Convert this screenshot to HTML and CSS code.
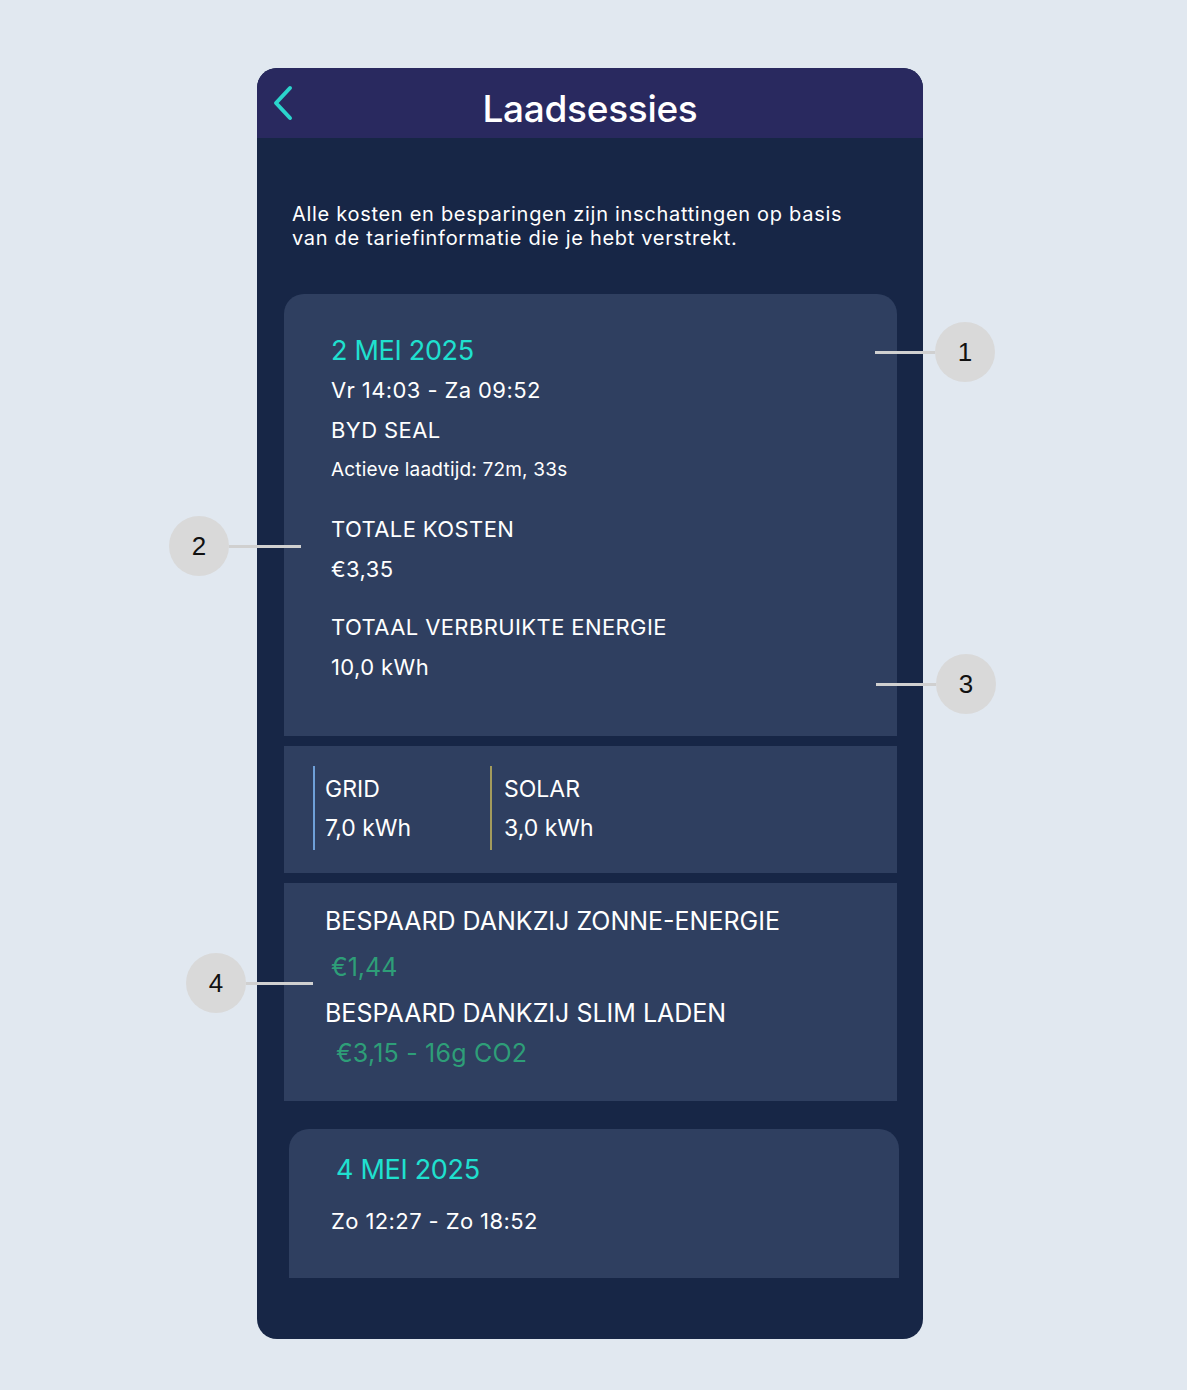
FILE: index.html
```html
<!DOCTYPE html>
<html>
    <head>
        <title>Laadsessies</title>
        <link rel="stylesheet" href="styles.css">
    </head>
    <body>
        <div class="phone">
            <div class="header">
                <svg class="back" width="24" height="36" viewBox="0 0 24 36">
                    <path d="M19 3 L5 18 L19 33" fill="none" stroke="#2bd4cc" stroke-width="4" stroke-linecap="round" stroke-linejoin="round"/>
                </svg>
                <p class="title">Laadsessies</p>
            </div>
            <div class="content">
                <p class="intro">Alle kosten en besparingen zijn inschattingen op basis van de tariefinformatie die je hebt verstrekt.</p>

                <div class="card first">
                    <p class="date">2 MEI 2025</p>
                    <p class="row">Vr 14:03 - Za 09:52</p>
                    <p class="row">BYD SEAL</p>
                    <p class="row small">Actieve laadtijd: 72m, 33s</p>
                    <p class="row group">TOTALE KOSTEN</p>
                    <p class="row">€3,35</p>
                    <p class="row group2">TOTAAL VERBRUIKTE ENERGIE</p>
                    <p class="row">10,0 kWh</p>
                </div>

                <div class="card split">
                    <div class="source grid">
                        <p>GRID</p>
                        <p>7,0 kWh</p>
                    </div>
                    <div class="source solar">
                        <p>SOLAR</p>
                        <p>3,0 kWh</p>
                    </div>
                </div>

                <div class="card savings">
                    <p class="label">BESPAARD DANKZIJ ZONNE-ENERGIE</p>
                    <p class="green">€1,44</p>
                    <p class="label">BESPAARD DANKZIJ SLIM LADEN</p>
                    <p class="green second">€3,15 - 16g CO2</p>
                </div>

                <div class="card next">
                    <p class="date">4 MEI 2025</p>
                    <p class="row">Zo 12:27 - Zo 18:52</p>
                </div>
            </div>

            <div class="note n1"><span class="line"></span><span class="dot">1</span></div>
            <div class="note n2"><span class="dot">2</span><span class="line"></span></div>
            <div class="note n3"><span class="line"></span><span class="dot">3</span></div>
            <div class="note n4"><span class="dot">4</span><span class="line"></span></div>
        </div>
    </body>
</html>
```

FILE: styles.css
```css
body{
    margin: 0;
    background-color: #e1e8f0;
    font-family: Inter, "Noto Sans", sans-serif;
    color: white;
    padding-top: 68px;
    height: 1322px;
}
p{
    margin: 0;
}
.phone{
    position: relative;
    width: 666px;
    height: 1271px;
    margin-left: 257px;
    background-color: #172646;
    border-radius: 20px;
}
.header{
    position: relative;
    height: 70px;
    background-color: #29295f;
    border-radius: 20px 20px 0 0;
    display: flex;
    justify-content: center;
    align-items: center;
}
.back{
    position: absolute;
    left: 14px;
    top: 17px;
}
.title{
    font-size: 37px;
    font-weight: 500;
    letter-spacing: -0.3px;
    padding-top: 10px;
}
.content{
    padding: 0 26px 0 27px;
}
.intro{
    width: 570px;
    font-size: 20px;
    line-height: 24px;
    padding: 64px 0 0 8px;
    letter-spacing: 0.7px;
}
.card{
    background-color: #2f3f60;
}
.first{
    margin-top: 44px;
    border-radius: 20px 20px 0 0;
    padding: 37px 0 49px 47px;
}
.date{
    color: #1fe0cf;
    font-size: 27px;
    line-height: 39px;
    letter-spacing: -0.3px;
}
.row{
    font-size: 22px;
    line-height: 40px;
    letter-spacing: 0.4px;
}
.small{
    font-size: 19px;
    letter-spacing: 0.2px;
}
.group{
    margin-top: 19px;
}
.group2{
    margin-top: 18px;
}
.split{
    margin-top: 10px;
    display: flex;
    padding: 20px 0 23px 29px;
}
.source{
    width: 177px;
    box-sizing: border-box;
    border-left: 2px solid #6fa0d8;
    padding: 4px 0 2px 10px;
    font-size: 23px;
    line-height: 39px;
}
.solar{
    border-left-color: #a39b5c;
    padding-left: 12px;
}
.savings{
    margin-top: 10px;
    padding: 18px 0 28px 41px;
}
.label{
    font-size: 25px;
    line-height: 40px;
}
.green{
    color: #2e9e78;
    font-size: 25px;
    line-height: 52px;
    padding-left: 6px;
}
.second{
    padding-left: 11px;
    line-height: 40px;
    letter-spacing: 0.2px;
}
.next{
    margin: 28px -2px 0 5px;
    height: 149px;
    border-radius: 20px 20px 0 0;
    padding: 21px 0 0 42px;
    box-sizing: border-box;
}
.next .date{
    padding-left: 5px;
    line-height: 40px;
}
.next .row{
    margin-top: 11px;
}
.note{
    position: absolute;
    display: flex;
    align-items: center;
}
.line{
    height: 3px;
    background-color: #d0d0d0;
}
.dot{
    width: 60px;
    height: 60px;
    border-radius: 50%;
    background-color: #d9d9d9;
    color: #111;
    font-family: "Liberation Sans", sans-serif;
    font-size: 26px;
    display: flex;
    justify-content: center;
    align-items: center;
}
.n1{
    left: 618px;
    top: 254px;
}
.n1 .line{
    width: 60px;
}
.n2{
    left: -88px;
    top: 448px;
}
.n2 .line{
    width: 72px;
}
.n3{
    left: 619px;
    top: 586px;
}
.n3 .line{
    width: 60px;
}
.n4{
    left: -71px;
    top: 885px;
}
.n4 .line{
    width: 67px;
}
```
